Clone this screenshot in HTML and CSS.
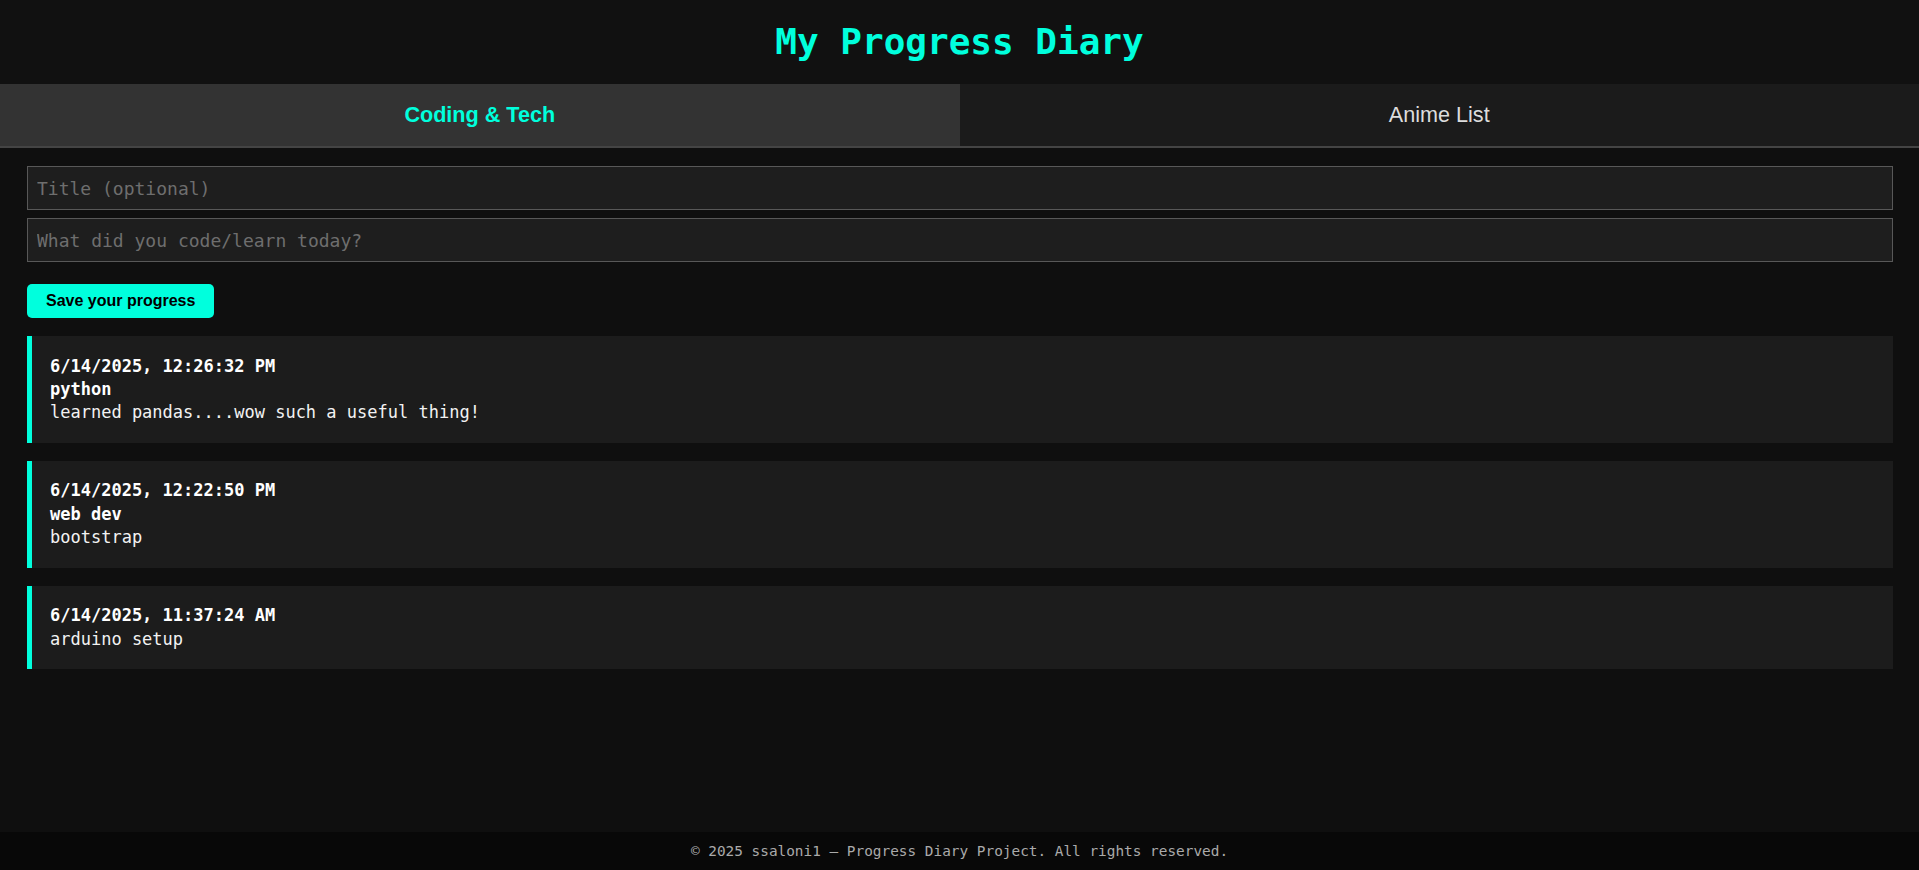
FILE: index.html
```html
<!DOCTYPE html>
<html lang="en">
<head>
<meta charset="utf-8">
<title>My Progress Diary</title>
<link rel="stylesheet" href="styles.css">
</head>
<body>
<header class="site-header">
  <h1 class="site-title">My Progress Diary</h1>
</header>
<nav class="tabs">
  <button class="tab tab-active">Coding &amp; Tech</button>
  <button class="tab">Anime List</button>
</nav>
<main class="content">
  <form class="entry-form">
    <input class="field" type="text" placeholder="Title (optional)">
    <input class="field" type="text" placeholder="What did you code/learn today?">
    <button class="save-btn" type="button">Save your progress</button>
  </form>
  <section class="entries">
    <article class="entry">
      <div class="entry-date">6/14/2025, 12:26:32 PM</div>
      <div class="entry-title">python</div>
      <div class="entry-text">learned pandas....wow such a useful thing!</div>
    </article>
    <article class="entry">
      <div class="entry-date">6/14/2025, 12:22:50 PM</div>
      <div class="entry-title">web dev</div>
      <div class="entry-text">bootstrap</div>
    </article>
    <article class="entry">
      <div class="entry-date">6/14/2025, 11:37:24 AM</div>
      <div class="entry-text">arduino setup</div>
    </article>
  </section>
</main>
<footer class="site-footer">© 2025 ssaloni1 — Progress Diary Project. All rights reserved.</footer>
</body>
</html>
```

FILE: styles.css
```css
* { box-sizing: border-box; }

html, body { height: 100%; }

body {
  margin: 0;
  min-height: 100vh;
  display: flex;
  flex-direction: column;
  background: #0f0f0f;
  color: #eee;
  font-family: "DejaVu Sans Mono", "Liberation Mono", monospace;
}

.site-header {
  background: #111;
  padding: 20px 0;
  text-align: center;
}

.site-title {
  margin: 0;
  font-size: 36px;
  line-height: 44px;
  font-weight: 700;
  color: #00ffdd;
}

.tabs {
  display: flex;
  border-bottom: 2px solid #444;
}

.tab {
  flex: 1;
  height: 62px;
  border: 0;
  margin: 0;
  padding: 0;
  background: #1b1b1b;
  color: #ddd;
  font-family: "Liberation Sans", Arial, sans-serif;
  font-size: 21.6px;
  font-weight: 400;
}

.tab-active {
  background: #333;
  color: #00ffdd;
  font-weight: 700;
}

.content {
  flex: 1;
  padding: 18px 26px 0 27px;
}

.entry-form {
  display: flex;
  flex-direction: column;
  align-items: flex-start;
  gap: 8px;
}

.field {
  width: 100%;
  height: 44px;
  padding: 0 9px;
  background: #1e1e1e;
  border: 1px solid #585858;
  color: #eee;
  font-family: "DejaVu Sans Mono", "Liberation Mono", monospace;
  font-size: 18px;
  outline: none;
}

.field::placeholder { color: #6e6e6e; }

.save-btn {
  margin-top: 14px;
  height: 34px;
  padding: 0 19px;
  background: #00ffdd;
  color: #000;
  border: 0;
  border-radius: 5px;
  font-family: "Liberation Sans", Arial, sans-serif;
  font-size: 16px;
  font-weight: 700;
}

.entries {
  margin-top: 18px;
  display: flex;
  flex-direction: column;
  gap: 18px;
}

.entry {
  background: #1c1c1c;
  border-left: 5px solid #00ffdd;
  padding: 18.5px 18px;
  font-size: 17px;
  line-height: 23.3px;
  color: #f2f2f2;
}

.entry-date,
.entry-title {
  font-weight: 700;
  color: #fff;
}

.site-footer {
  height: 38px;
  display: flex;
  align-items: center;
  justify-content: center;
  background: #080808;
  color: #aaa;
  font-size: 14.4px;
}
```
